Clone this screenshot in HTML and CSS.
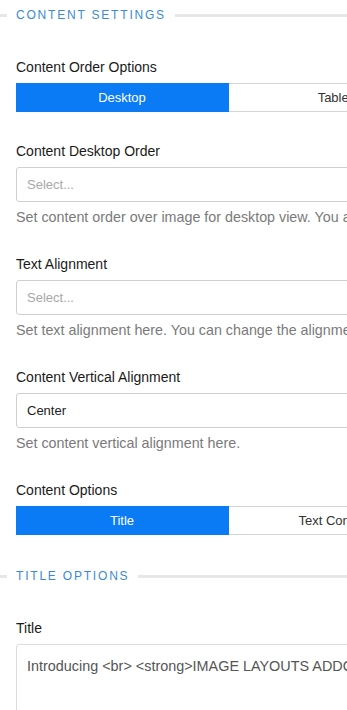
FILE: index.html
```html
<!DOCTYPE html>
<html lang="en">
<head>
  <meta charset="UTF-8">
  <meta name="viewport" content="width=device-width, initial-scale=1.0">
  <title>Content Settings</title>
  <link rel="stylesheet" href="styles.css">
</head>
<body>
  <div class="panel">

    <!-- Content settings -->
    <div class="section-title"><span>Content Settings</span></div>

    <div class="field">
      <label class="field-label">Content Order Options</label>
      <div class="tabs">
        <button class="tab active">Desktop</button>
        <button class="tab">Tablet</button>
        <button class="tab">Mobile</button>
      </div>
    </div>

    <div class="field">
      <label class="field-label">Content Desktop Order</label>
      <div class="select placeholder">Select...</div>
      <p class="help">Set content order over image for desktop view. You also can change the order for tablet and mobile.</p>
    </div>

    <div class="field">
      <label class="field-label">Text Alignment</label>
      <div class="select placeholder">Select...</div>
      <p class="help">Set text alignment here. You can change the alignment for tablet and mobile view.</p>
    </div>

    <div class="field">
      <label class="field-label">Content Vertical Alignment</label>
      <div class="select">Center</div>
      <p class="help">Set content vertical alignment here.</p>
    </div>

    <div class="field">
      <label class="field-label">Content Options</label>
      <div class="tabs">
        <button class="tab active">Title</button>
        <button class="tab">Text Content</button>
        <button class="tab">Button</button>
      </div>
    </div>

    <!-- Title options -->
    <div class="section-title"><span>Title Options</span></div>

    <div class="field">
      <label class="field-label">Title</label>
      <textarea class="textarea">Introducing <br> <strong>IMAGE LAYOUTS ADDON</strong></textarea>
    </div>

  </div>
</body>
</html>
```

FILE: styles.css
```css
html, body {
  margin: 0;
  padding: 0;
  overflow: hidden;
  background-color: #fff;
}
body {
  font-family: "Liberation Sans", Arial, sans-serif;
  color: #1d2327;
}
.panel {
  width: 700px;
}
.section-title {
  display: flex;
  align-items: center;
  height: 30px;
  font-size: 12px;
  letter-spacing: 1.8px;
  text-transform: uppercase;
  color: #3a8ad6;
}
.section-title::before,
.section-title::after {
  content: "";
  height: 3px;
  background-color: #e7e7e9;
}
.section-title::before {
  width: 7px;
  margin-right: 9px;
}
.section-title::after {
  flex: 1;
  margin-left: 9px;
}
.field {
  padding: 0 16px;
  margin-top: 29px;
  width: 640px;
}
.section-title + .field {
  margin-top: 27px;
}
.field + .section-title {
  margin-top: 26px;
}
.field-label {
  display: block;
  font-size: 14px;
  line-height: 20px;
  color: #1a1a1a;
  margin-bottom: 6px;
}
.tabs {
  display: grid;
  grid-template-columns: repeat(3, 213px);
}
.tab {
  height: 29px;
  padding: 0;
  font-family: inherit;
  font-size: 13px;
  color: #333;
  background-color: #fff;
  border: 1px solid #d4d4d4;
  border-left: none;
  border-radius: 0;
}
.tab.active {
  background-color: #0a7bf4;
  border-color: #0a7bf4;
  color: #fff;
}
.select {
  height: 33px;
  line-height: 33px;
  padding: 0 10px;
  font-size: 13px;
  color: #222;
  border: 1px solid #cfcfcf;
  border-radius: 3px;
}
.select.placeholder {
  color: #a8a8a8;
}
.help {
  margin: 6px 0 0;
  font-size: 14.3px;
  line-height: 18px;
  color: #7a7a7a;
  white-space: nowrap;
}
.field:has(.help) + .field {
  margin-top: 28px;
}
.textarea {
  display: block;
  box-sizing: border-box;
  width: 100%;
  height: 110px;
  padding: 12px 10px;
  font-family: inherit;
  font-size: 14.4px;
  line-height: 18px;
  color: #555;
  border: 1px solid #dcdcdc;
  border-radius: 3px;
  resize: none;
}
```
